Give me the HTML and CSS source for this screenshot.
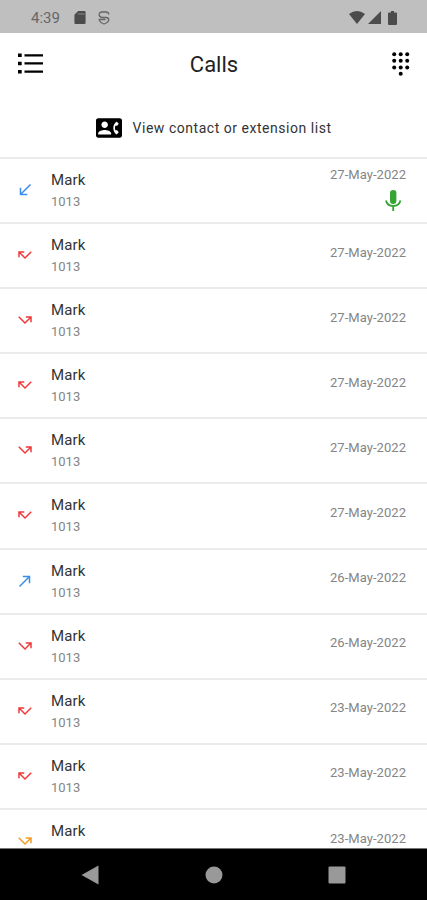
FILE: index.html
```html
<!DOCTYPE html>
<html lang="en">
<head>
    <meta charset="utf-8">
    <meta name="viewport" content="width=device-width, initial-scale=1">
    <title>Calls</title>
    <link rel="stylesheet" href="styles.css">
</head>
<body>
    <!-- icons used in the call list -->
    <svg class="sprite">
        <symbol id="received" viewBox="0 0 24 24"><path d="M20 5.41L18.59 4 7 15.59V9H5v10h10v-2H8.41z"/></symbol>
        <symbol id="made" viewBox="0 0 24 24"><path d="M9 5v2h6.59L4 18.59 5.41 20 17 8.41V15h2V5z"/></symbol>
        <symbol id="missed" viewBox="0 0 24 24"><path d="M19.59 7L12 14.59 6.41 9H11V7H3v8h2v-4.59l7 7 9-9z"/></symbol>
        <symbol id="missed-out" viewBox="0 0 24 24"><path d="M3 8.41l9 9 7-7V15h2V7h-8v2h4.59L12 14.59 4.41 7z"/></symbol>
    </svg>

    <div class="status-bar">
        <span class="time">4:39</span>
        <svg class="sd" viewBox="0 0 12 14"><path d="M4 0h7q1 0 1 1v12q0 1-1 1H1q-1 0-1-1V4z"/><path class="slot" d="M3.6 3.2H11"/></svg>
        <svg class="app" viewBox="0 0 12 14"><path d="M10.800 3.500Q10.500 1 8 1H4Q1.200 1 1.200 3.600T4 6.500h4q2.800 0 2.800 2.300Q10.500 11.500 6 13 1.500 11.500 1.200 8.500H7.500"/></svg>
        <div class="signals">
            <svg width="16" height="13" viewBox="0 0 16 13"><path d="M0 3Q8-3 16 3L8 13z"/></svg>
            <svg width="13" height="13" viewBox="0 0 13 13"><path d="M13 0v13H0z"/></svg>
            <svg class="battery" width="9" height="14" viewBox="0 0 9 14"><path d="M3 0h3v1.500h2q1 0 1 1V13q0 1-1 1H1q-1 0-1-1V2.500q0-1 1-1h2z"/></svg>
        </div>
    </div>

    <div class="header">
        <svg width="26" height="21" viewBox="0 0 26 21">
            <path d="M0 .5h3.700v3.500H0zM0 8.700h3.700v3.500H0zM0 16.900h3.700v3.500H0zM6.500 1.200H25v2.300H6.500zM6.500 9.300H25v2.300H6.500zM6.500 17.500H25v2.300H6.500z"/>
        </svg>
        <h1>Calls</h1>
        <svg width="18" height="24" viewBox="0 0 18 24">
            <circle cx="2.200" cy="2.200" r="2"/><circle cx="8.700" cy="2.200" r="2"/><circle cx="15.200" cy="2.200" r="2"/>
            <circle cx="2.200" cy="8.800" r="2"/><circle cx="8.700" cy="8.800" r="2"/><circle cx="15.200" cy="8.800" r="2"/>
            <circle cx="2.200" cy="15.400" r="2"/><circle cx="8.700" cy="15.400" r="2"/><circle cx="15.200" cy="15.400" r="2"/>
            <circle cx="8.700" cy="21.700" r="2"/>
        </svg>
    </div>

    <div class="contacts">
        <svg width="26" height="26" viewBox="0 0 24 24"><path d="M22 3H2C.9 3 0 3.900 0 5v14c0 1.100.9 2 2 2h20c1.100 0 1.990-.9 1.990-2L24 5c0-1.100-.9-2-2-2zM8 6c1.660 0 3 1.340 3 3s-1.340 3-3 3-3-1.340-3-3 1.340-3 3-3zm6 12H2v-1c0-2 4-3.100 6-3.100s6 1.100 6 3.100v1zm3.850-4h1.640L21 16l-1.990 1.990c-1.310-.98-2.280-2.380-2.730-3.990-.18-.64-.28-1.310-.28-2s.1-1.360.28-2c.45-1.620 1.420-3.010 2.730-3.990L21 8l-1.510 2h-1.640c-.22.63-.35 1.300-.35 2s.13 1.370.35 2z"/></svg>
        <span>View contact or extension list</span>
    </div>

    <div class="calls">
        <div class="call">
            <svg class="arrow blue"><use href="#received"/></svg>
            <div class="who"><div class="name">Mark</div><div class="number">1013</div></div>
            <div class="when recorded">
                <span class="date">27-May-2022</span>
                <svg class="mic" viewBox="0 0 16 22"><rect x="5" y="0" width="6.400" height="14" rx="3.200"/><path d="M1 10.500q1 5.500 7.200 5.500t7.200-5.500M8.200 16v5"/></svg>
            </div>
        </div>
        <div class="call">
            <svg class="arrow red"><use href="#missed"/></svg>
            <div class="who"><div class="name">Mark</div><div class="number">1013</div></div>
            <div class="when"><span class="date">27-May-2022</span></div>
        </div>
        <div class="call">
            <svg class="arrow red"><use href="#missed-out"/></svg>
            <div class="who"><div class="name">Mark</div><div class="number">1013</div></div>
            <div class="when"><span class="date">27-May-2022</span></div>
        </div>
        <div class="call">
            <svg class="arrow red"><use href="#missed"/></svg>
            <div class="who"><div class="name">Mark</div><div class="number">1013</div></div>
            <div class="when"><span class="date">27-May-2022</span></div>
        </div>
        <div class="call">
            <svg class="arrow red"><use href="#missed-out"/></svg>
            <div class="who"><div class="name">Mark</div><div class="number">1013</div></div>
            <div class="when"><span class="date">27-May-2022</span></div>
        </div>
        <div class="call">
            <svg class="arrow red"><use href="#missed"/></svg>
            <div class="who"><div class="name">Mark</div><div class="number">1013</div></div>
            <div class="when"><span class="date">27-May-2022</span></div>
        </div>
        <div class="call">
            <svg class="arrow blue"><use href="#made"/></svg>
            <div class="who"><div class="name">Mark</div><div class="number">1013</div></div>
            <div class="when"><span class="date">26-May-2022</span></div>
        </div>
        <div class="call">
            <svg class="arrow red"><use href="#missed-out"/></svg>
            <div class="who"><div class="name">Mark</div><div class="number">1013</div></div>
            <div class="when"><span class="date">26-May-2022</span></div>
        </div>
        <div class="call">
            <svg class="arrow red"><use href="#missed"/></svg>
            <div class="who"><div class="name">Mark</div><div class="number">1013</div></div>
            <div class="when"><span class="date">23-May-2022</span></div>
        </div>
        <div class="call">
            <svg class="arrow red"><use href="#missed"/></svg>
            <div class="who"><div class="name">Mark</div><div class="number">1013</div></div>
            <div class="when"><span class="date">23-May-2022</span></div>
        </div>
        <div class="call">
            <svg class="arrow orange"><use href="#missed-out"/></svg>
            <div class="who"><div class="name">Mark</div><div class="number">1013</div></div>
            <div class="when"><span class="date">23-May-2022</span></div>
        </div>
    </div>

    <div class="nav-bar">
        <svg width="18" height="20" viewBox="0 0 18 20"><path d="M17.500.5v19L.5 10z"/></svg>
        <svg width="18" height="18" viewBox="0 0 18 18"><circle cx="9" cy="9" r="8.500"/></svg>
        <svg width="18" height="18" viewBox="0 0 18 18"><rect x=".5" y=".5" width="17" height="17" rx="1"/></svg>
    </div>
</body>
</html>
```
FILE: styles.css
```css
* {
    box-sizing: border-box;
}

body {
    margin: 0;
    height: 900px;
    display: flex;
    flex-direction: column;
    overflow: hidden;
    background-color: #fff;
    font-family: Roboto, "Liberation Sans", sans-serif;
}

svg {
    display: block;
    flex-shrink: 0;
}

.sprite {
    display: none;
}

/* Android status bar */
.status-bar {
    display: flex;
    align-items: center;
    flex-shrink: 0;
    height: 33px;
    padding: 2px 30px 0 31px;
    background-color: #bfbfbf;
    color: #666;
    fill: #4c4c4c;
}

.time {
    width: 43px;
    font-size: 15px;
}

.sd {
    width: 12px;
    height: 13px;
}

.slot {
    stroke: #8c8c8c;
    stroke-width: 1;
}

.app {
    width: 12px;
    height: 14px;
    margin-left: 12px;
    fill: none;
    stroke: #666;
    stroke-width: 1.3;
}

.signals {
    display: flex;
    align-items: center;
    margin-left: auto;
}

.signals svg + svg {
    margin-left: 3px;
}

.signals .battery {
    margin-left: 7px;
}

.header {
    display: grid;
    grid-template-columns: 1fr auto 1fr;
    align-items: center;
    flex-shrink: 0;
    height: 61px;
    padding: 0 17px 0 18px;
}

.header h1 {
    margin: 2px 0 0;
    font-size: 22px;
    font-weight: 400;
    color: #222;
}

.header svg:last-child {
    justify-self: end;
}

.contacts {
    display: flex;
    align-items: center;
    justify-content: center;
    flex-shrink: 0;
    height: 63px;
    padding-top: 4px;
    gap: 11px;
    font-size: 14px;
    letter-spacing: 0.53px;
    color: #333;
}

/* call list */
.calls {
    flex: 1;
    min-height: 0;
    overflow: hidden;
}

.call {
    display: flex;
    height: 65.1px;
    padding: 0 21px 0 16px;
    border-top: 2px solid #ebebeb;
}

.arrow {
    width: 18px;
    height: 18px;
    margin-top: 22px;
}

.blue {
    fill: #3b8eea;
}

.red {
    fill: #ee3a3a;
}

.orange {
    fill: #f29a25;
}

.who {
    margin: 11px 0 0 17px;
}

.name {
    font-size: 15px;
    line-height: 20px;
    letter-spacing: 0.1px;
    color: #333;
}

.number {
    margin-top: 1px;
    font-size: 13px;
    line-height: 21px;
    color: #858585;
}

.when {
    display: flex;
    flex-direction: column;
    align-items: flex-end;
    margin: 18.600px 0 0 auto;
}

.recorded {
    margin-top: 6px;
}

.date {
    font-size: 13px;
    line-height: 20px;
    letter-spacing: 0.05px;
    color: #858585;
}

.mic {
    width: 16px;
    height: 22px;
    margin: 5px 5px 0 0;
    fill: #35a435;
}

.mic path {
    fill: none;
    stroke: #35a435;
    stroke-width: 1.8;
}

/* Android navigation buttons */
.nav-bar {
    display: flex;
    align-items: center;
    justify-content: space-between;
    flex-shrink: 0;
    height: 52px;
    padding: 0 81px;
    border-top: 1px solid #777;
    background-color: #000;
    fill: #999;
}
```
